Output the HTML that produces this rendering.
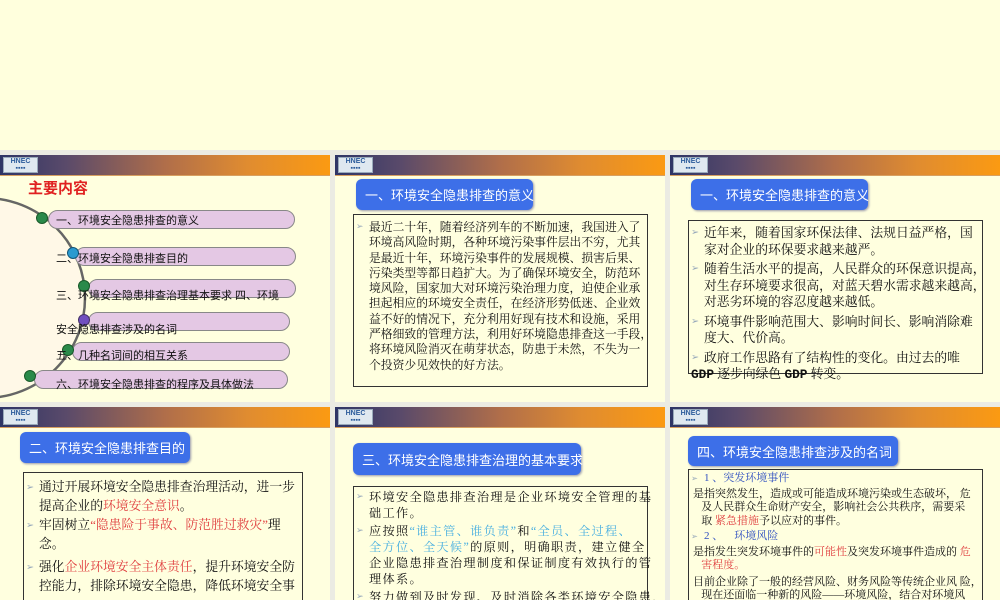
<!DOCTYPE html>
<html><head><meta charset="utf-8"><style>
*{margin:0;padding:0;box-sizing:border-box}
body{width:1000px;height:600px;position:relative;overflow:hidden;background:#ebebe3;font-family:"Liberation Serif","Noto Serif CJK SC",serif}
.top{position:absolute;left:0;top:0;width:1000px;height:150px;background:#ffffdd}
.s{position:absolute;background:#ffffdf;overflow:hidden}
.hd{position:absolute;left:0;top:0;right:0;height:21px;background:linear-gradient(90deg,#2e3566 0%,#5a4a6a 20%,#b06e4a 50%,#e08c30 75%,#fb9a12 100%);border-bottom:1px solid #d8a060}
.logo{position:absolute;left:3px;top:2px;width:35px;height:16px;background:#dfe8f0;border:1px solid #9ab;font:bold 7px "Liberation Sans",sans-serif;color:#2a5a9a;text-align:center;line-height:7px;overflow:hidden}
.tb{position:absolute;background:#3d6fe8;border-radius:6px;color:#fff;font-family:"Liberation Sans","Noto Sans CJK SC",sans-serif;font-size:13px;display:flex;align-items:center;padding-left:9px;box-shadow:1px 1px 2px #99a;white-space:nowrap}
.bx{position:absolute;border:1px solid #333;color:#111;white-space:nowrap}
.bx p{position:relative;padding-left:15px}
.bx p:before{content:"➢";position:absolute;left:2px;color:#9ab;font-size:0.75em;font-family:"DejaVu Sans",sans-serif}
.r{color:#e04040}.c{color:#4ab0e0}.b{color:#3050c0}
.pill{position:absolute;background:#e4c8e4;border:1px solid #888;border-radius:10px}
.pt{position:absolute;font-family:"Liberation Sans","Noto Sans CJK SC",sans-serif;font-size:11px;color:#111;white-space:nowrap}
.dot{position:absolute;width:12px;height:12px;border-radius:50%;background:#2a8a4a;border:1px solid #1a5a2a}
</style></head><body>
<div class="top"></div>

<!-- slide 1 -->
<div class="s" style="left:0;top:155px;width:330px;height:247px">
<div class="hd"><div class="logo">HNEC<br>▪▪▪▪</div></div>
<div style="position:absolute;left:28px;top:22px;font:bold 15px 'Liberation Sans','Noto Sans CJK SC',sans-serif;color:#e02020">主要内容</div>
<svg style="position:absolute;left:0;top:0" width="330" height="247">
<circle cx="-15" cy="143" r="98" fill="#fff6e8" opacity="0.8"/>
<circle cx="-15" cy="143" r="100" fill="none" stroke="#666" stroke-width="2.5"/>
</svg>
<div class="pill" style="left:48px;top:55px;width:247px;height:19px"></div>
<div class="pill" style="left:75px;top:92px;width:221px;height:19px"></div>
<div class="pill" style="left:88px;top:124px;width:208px;height:19px"></div>
<div class="pill" style="left:88px;top:157px;width:202px;height:19px"></div>
<div class="pill" style="left:72px;top:187px;width:218px;height:19px"></div>
<div class="pill" style="left:34px;top:215px;width:254px;height:19px"></div>
<div class="dot" style="left:36px;top:57px"></div>
<div class="dot" style="left:67px;top:92px;background:#2a9ad0;border-color:#157"></div>
<div class="dot" style="left:78px;top:125px"></div>
<div class="dot" style="left:78px;top:159px;background:#7050c0;border-color:#436"></div>
<div class="dot" style="left:62px;top:189px"></div>
<div class="dot" style="left:24px;top:215px"></div>
<div class="pt" style="left:56px;top:57px">一、环境安全隐患排查的意义</div>
<div class="pt" style="left:56px;top:95px">二、环境安全隐患排查目的</div>
<div class="pt" style="left:56px;top:132px">三、环境安全隐患排查治理基本要求 四、环境</div>
<div class="pt" style="left:56px;top:166px">安全隐患排查涉及的名词</div>
<div class="pt" style="left:56px;top:192px">五、几种名词间的相互关系</div>
<div class="pt" style="left:56px;top:221px">六、环境安全隐患排查的程序及具体做法</div>
</div>

<!-- slide 2 -->
<div class="s" style="left:335px;top:155px;width:330px;height:247px">
<div class="hd"><div class="logo">HNEC<br>▪▪▪▪</div></div>
<div class="tb" style="left:21px;top:24px;width:177px;height:31px">一、环境安全隐患排查的意义</div>
<div class="bx" style="left:18px;top:59px;width:295px;height:173px;font-size:11.8px;line-height:15.3px;padding:5px 0 0 0"><p>最近二十年，随着经济列车的不断加速，我国进入了<br>环境高风险时期，各种环境污染事件层出不穷，尤其<br>是最近十年，环境污染事件的发展规模、损害后果、<br>污染类型等都日趋扩大。为了确保环境安全，防范环<br>境风险，国家加大对环境污染治理力度，迫使企业承<br>担起相应的环境安全责任，在经济形势低迷、企业效<br>益不好的情况下，充分利用好现有技术和设施，采用<br>严格细致的管理方法，利用好环境隐患排查这一手段，<br>将环境风险消灭在萌芽状态，防患于未然，不失为一<br>个投资少见效快的好方法。</p></div>
</div>

<!-- slide 3 -->
<div class="s" style="left:670px;top:155px;width:330px;height:247px">
<div class="hd"><div class="logo">HNEC<br>▪▪▪▪</div></div>
<div class="tb" style="left:21px;top:24px;width:177px;height:31px">一、环境安全隐患排查的意义</div>
<div class="bx" style="left:18px;top:65px;width:295px;height:154px;font-size:12.8px;line-height:16.5px;padding:4px 0 0 0">
<p style="margin-bottom:3px">近年来，随着国家环保法律、法规日益严格，国<br>家对企业的环保要求越来越严。</p>
<p style="margin-bottom:3px">随着生活水平的提高，人民群众的环保意识提高，<br>对生存环境要求很高，对蓝天碧水需求越来越高，<br>对恶劣环境的容忍度越来越低。</p>
<p style="margin-bottom:3px">环境事件影响范围大、影响时间长、影响消除难<br>度大、代价高。</p>
<p>政府工作思路有了结构性的变化。由过去的唯<br><span style="margin-left:-13px;font-family:'Liberation Mono','Noto Sans CJK SC',monospace;font-weight:bold">GDP</span> 逐步向绿色 <span style="font-family:'Liberation Mono',monospace;font-weight:bold">GDP</span> 转变。</p>
</div>
</div>

<!-- slide 4 -->
<div class="s" style="left:0;top:407px;width:330px;height:193px">
<div class="hd"><div class="logo">HNEC<br>▪▪▪▪</div></div>
<div class="tb" style="left:20px;top:25px;width:170px;height:31px">二、环境安全隐患排查目的</div>
<div class="bx" style="left:23px;top:65px;width:280px;height:140px;font-size:12.8px;line-height:19px;padding:5px 0 0 0">
<p>通过开展环境安全隐患排查治理活动，进一步<br>提高企业的<span class="r">环境安全意识</span>。</p>
<p>牢固树立<span class="r">“隐患险于事故、防范胜过救灾”</span>理<br>念。</p>
<p style="margin-top:4px">强化<span class="r">企业环境安全主体责任</span>，提升环境安全防<br>控能力，排除环境安全隐患，降低环境安全事</p>
</div>
</div>

<!-- slide 5 -->
<div class="s" style="left:335px;top:407px;width:330px;height:193px">
<div class="hd"><div class="logo">HNEC<br>▪▪▪▪</div></div>
<div class="tb" style="left:18px;top:36px;width:228px;height:32px">三、环境安全隐患排查治理的基本要求</div>
<div class="bx" style="left:18px;top:79px;width:295px;height:130px;font-size:12.2px;line-height:16px;padding:2px 0 0 0;letter-spacing:1.3px">
<p style="margin-bottom:2px">环境安全隐患排查治理是企业环境安全管理的基<br>础工作。</p>
<p style="margin-bottom:2px">应按照<span class="c">“谁主管、谁负责”</span>和<span class="c">“全员、全过程、<br>全方位、全天候”</span>的原则，明确职责，建立健全<br>企业隐患排查治理制度和保证制度有效执行的管<br>理体系。</p>
<p>努力做到及时发现、及时消除各类环境安全隐患，</p>
</div>
</div>

<!-- slide 6 -->
<div class="s" style="left:670px;top:407px;width:330px;height:193px">
<div class="hd"><div class="logo">HNEC<br>▪▪▪▪</div></div>
<div class="tb" style="left:18px;top:29px;width:210px;height:30px">四、环境安全隐患排查涉及的名词</div>
<div class="bx" style="left:18px;top:62px;width:295px;height:140px;font-size:11px;line-height:13.5px;padding:2px 0 0 4px">
<p class="b" style="margin-left:-4px">1 、突发环境事件</p>
<div style="margin-top:2px">是指突然发生，造成或可能造成环境污染或生态破坏，&nbsp;危<br>&nbsp;&nbsp;&nbsp;及人民群众生命财产安全，影响社会公共秩序，需要采<br>&nbsp;&nbsp;&nbsp;取 <span class="r">紧急措施</span>予以应对的事件。</div>
<p class="b" style="margin-left:-4px;margin-top:2px">2 、&nbsp;&nbsp;&nbsp;&nbsp;环境风险</p>
<div style="margin-top:2px">是指发生突发环境事件的<span class="r">可能性</span>及突发环境事件造成的 <span class="r">危</span><br>&nbsp;&nbsp;&nbsp;<span class="r">害程度。</span></div>
<div style="margin-top:3px">目前企业除了一般的经营风险、财务风险等传统企业风 险，<br>&nbsp;&nbsp;&nbsp;现在还面临一种新的风险——环境风险，结合对环境风<br>&nbsp;&nbsp;&nbsp;险的认识，可将<span class="r">“企业环境风险”</span>定义为：企业生产</div>
</div>
</div>
</body></html>
